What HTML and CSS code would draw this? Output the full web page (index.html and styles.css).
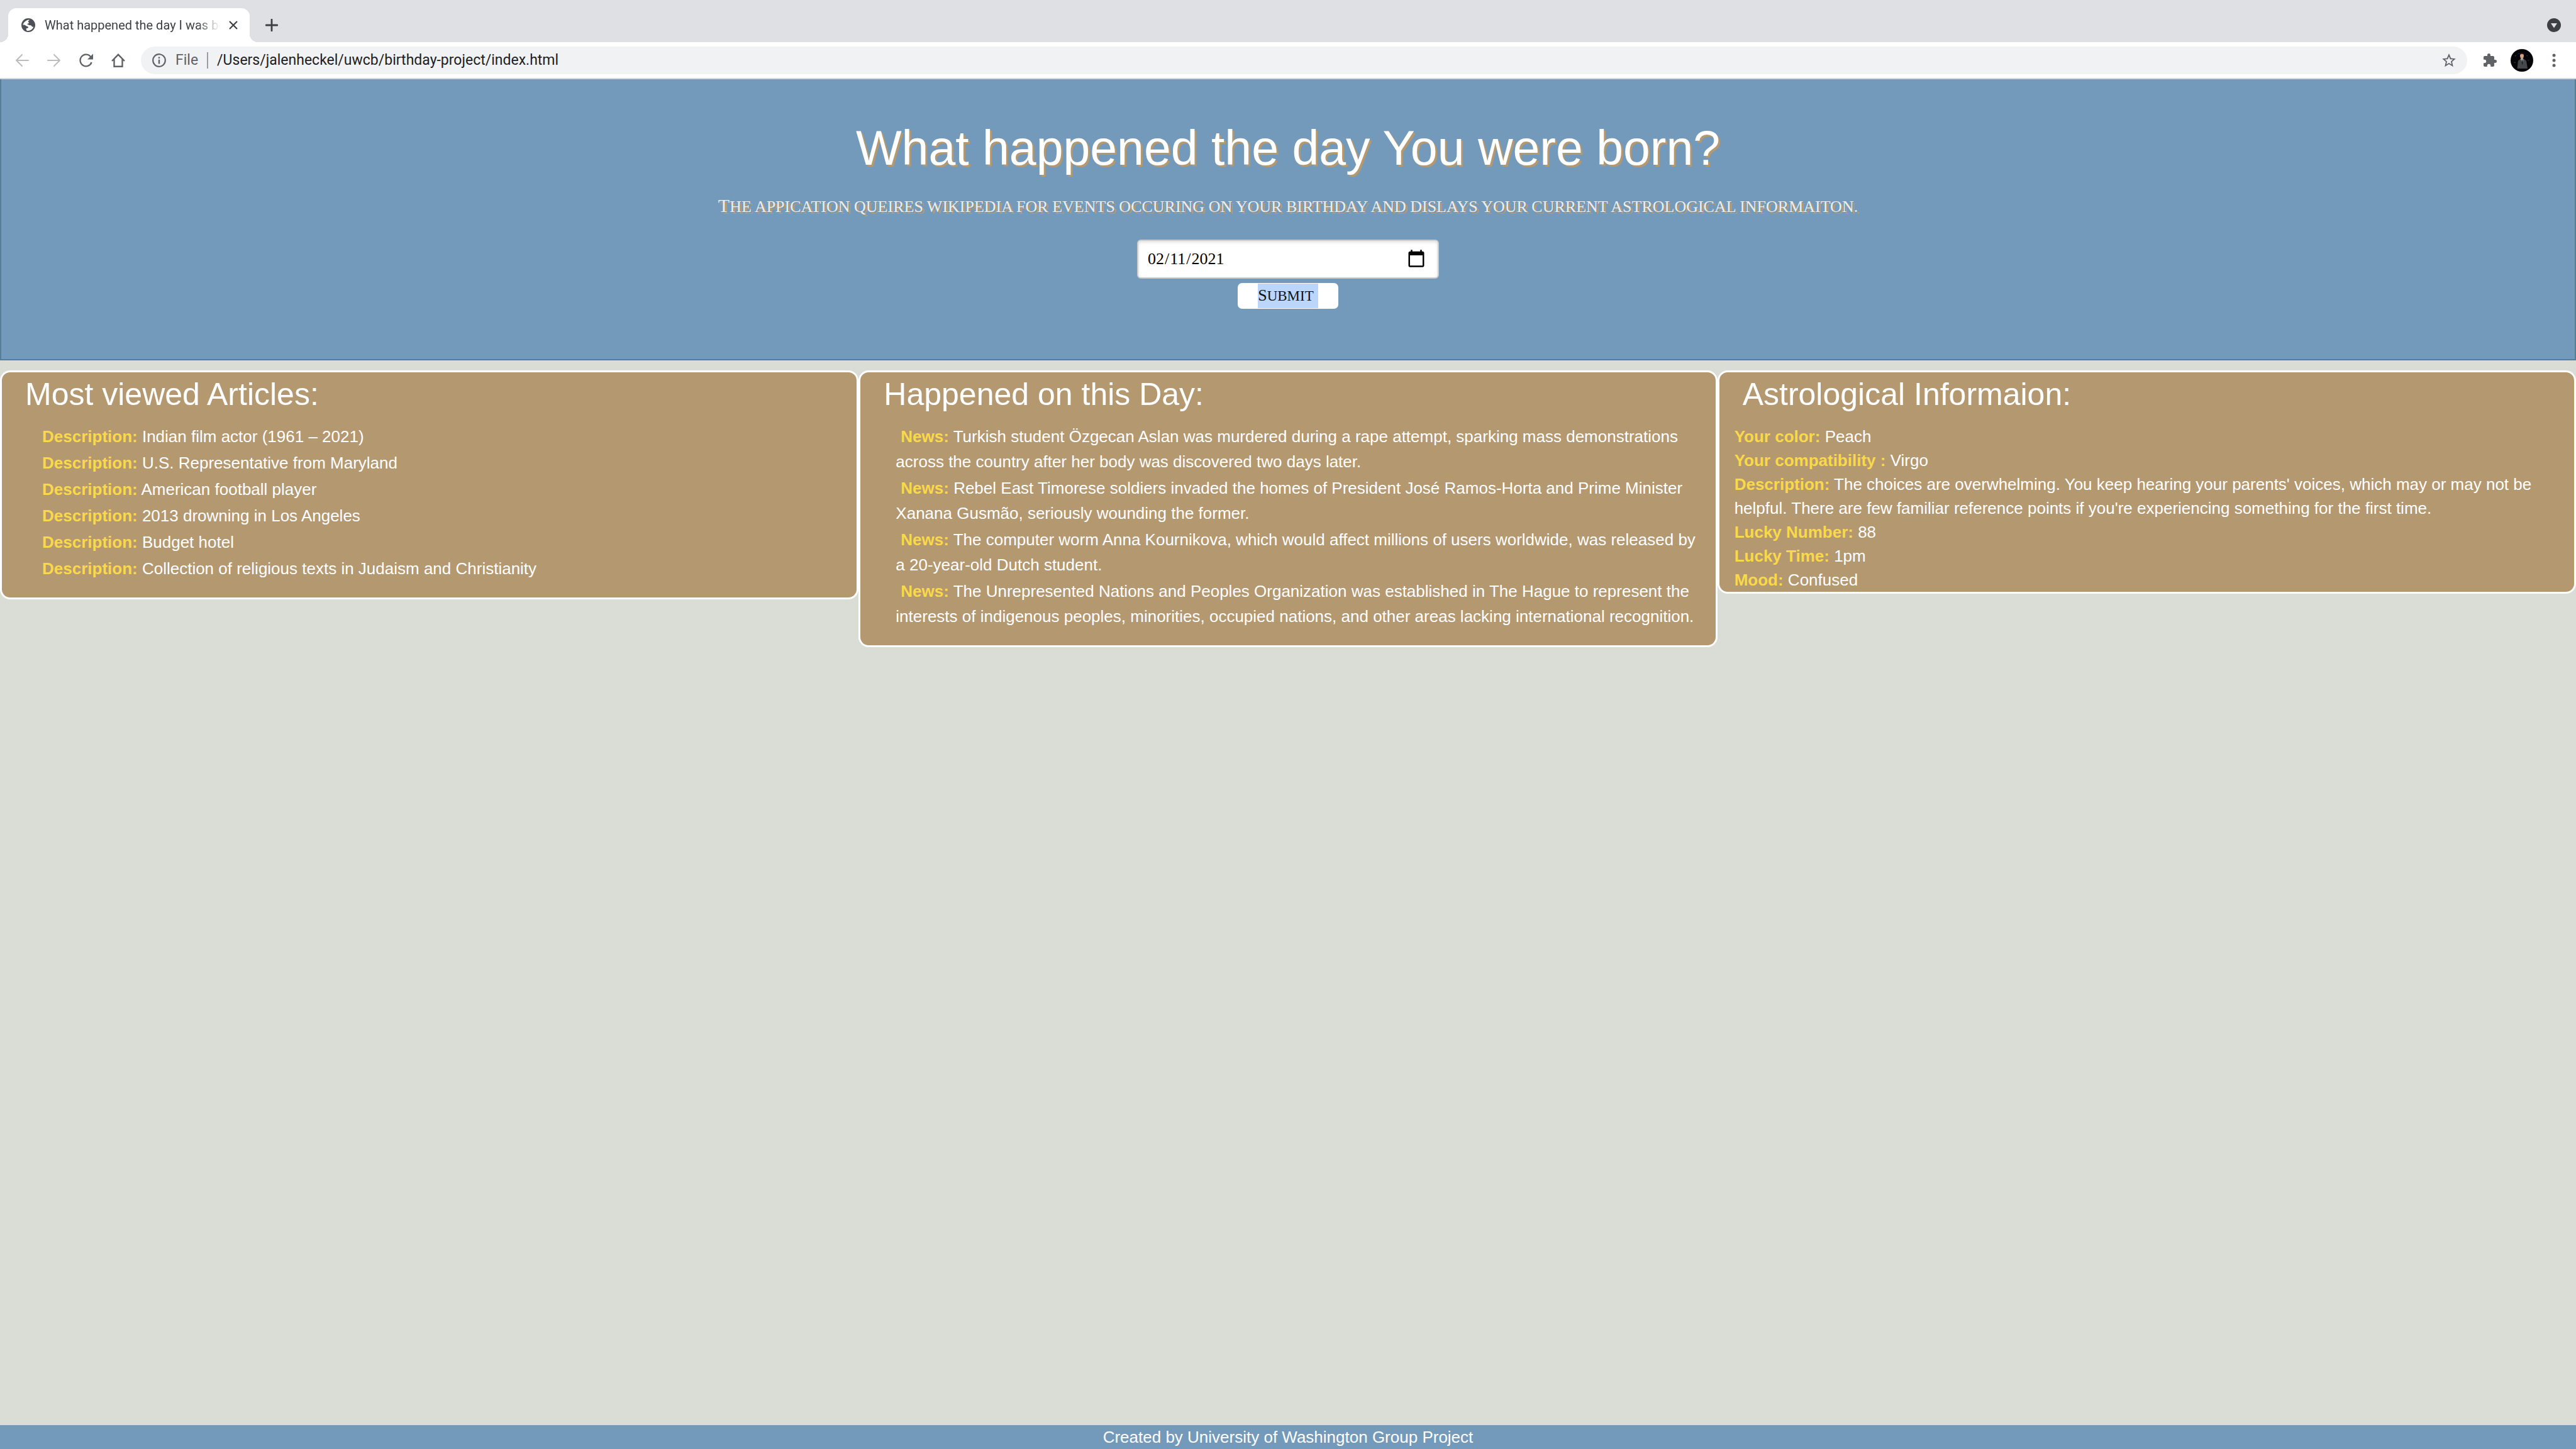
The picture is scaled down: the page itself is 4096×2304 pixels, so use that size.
FILE: index.html
```html
<!DOCTYPE html>
<html lang="en-US">
<head>
<meta charset="utf-8">
<title>What happened the day I was born?</title>
<link rel="stylesheet" href="styles.css">
</head>
<body>
<div class="browser">
  <div class="tabstrip">
    <div class="tab">
      <svg class="icon-22" viewBox="2 2 20 20" aria-hidden="true"><circle cx="12" cy="12" r="10" fill="#4d5156"/><path fill="#fff" d="M13.6 4.2c-.9-.1-4 .2-5.800 2.100C5.700 8.200 4.300 10 4.100 11.600c1.600-.3 3.200.2 4.400 1.200 1.200.9 3.300 1 3.500 2.100.1.900-.9 1.400-1.700 1.500-1 .1-1.500.6-1.300 1.600.1.700.4 1.400 1 1.900 3.500.9 8-1.300 9.600-5.400-1.100.2-2.300-.3-2.800-1.200-.4-.8-1.300-1.100-2.300-1-1.500.1-1.900-1-3.200-1.100-.9-.1-1-.9-.3-1.300.8-.4 2-.2 2-1.200 0-1.100-1.500-1-1.300-2.200.1-.9 1.500-.8 1.900-2.300z"/></svg>
      <span class="tab-title">What happened the day I was born?</span>
      <button class="icon-btn" aria-label="Close tab"><svg class="icon-14" viewBox="0 0 14 14"><path d="M1 1l12 12M13 1L1 13" stroke="#3c4043" stroke-width="2.200" fill="none"/></svg></button>
    </div>
    <button class="icon-btn new-tab" aria-label="New tab"><svg class="icon-20" viewBox="0 0 20 20"><path d="M10 1v18M1 10h18" stroke="#3c4043" stroke-width="2.800" stroke-linecap="round"/></svg></button>
    <button class="icon-btn tab-search" aria-label="Search tabs"><svg class="icon-22" viewBox="0 0 22 22"><circle cx="11" cy="11" r="11" fill="#3c4043"/><path d="M6 8h10l-5 7.500z" fill="#dfe0e4"/></svg></button>
  </div>
  <div class="toolbar">
    <button class="icon-btn tool" aria-label="Back"><svg class="icon-22" viewBox="0 0 22 22"><path d="M21 11H2.500M11 2l-9 9 9 9" stroke="#babcbe" stroke-width="2" fill="none" stroke-linecap="round"/></svg></button>
    <button class="icon-btn tool" aria-label="Forward"><svg class="icon-22" viewBox="0 0 22 22"><path d="M1 11h18.500M11 2l9 9-9 9" stroke="#babcbe" stroke-width="2" fill="none" stroke-linecap="round"/></svg></button>
    <button class="icon-btn tool" aria-label="Reload"><svg class="icon-22" viewBox="0 0 22 22"><path d="M19.600 14A9.300 9.300 0 1 1 17.500 4.500L20 7" stroke="#5f6368" stroke-width="2.300" fill="none"/><path d="M22 .500V9.500H13z" fill="#5f6368"/></svg></button>
    <button class="icon-btn tool" aria-label="Home"><svg class="icon-22" viewBox="0 0 22 22"><path d="M1 12L11 1.800 21 12M4.500 9v11.700h13V9" stroke="#5f6368" stroke-width="2.400" fill="none"/></svg></button>
    <div class="omnibox">
      <svg class="icon-22" viewBox="0 0 22 22" aria-hidden="true"><circle cx="11" cy="11" r="9.800" fill="none" stroke="#5f6368" stroke-width="2.200"/><path d="M11 9.800V16.500M11 5.500V8" stroke="#5f6368" stroke-width="2.400"/></svg>
      <label class="scheme" for="url">File</label>
      <input class="url" id="url" type="text" value="/Users/jalenheckel/uwcb/birthday-project/index.html">
      <button class="icon-btn" aria-label="Bookmark this page"><svg class="icon-24" viewBox="0 0 24 24"><path fill="#5f6368" d="M22.800 9.240l-7.560-.650L12 1 8.760 8.600 1.200 9.240l5.800 5.030L5.200 22.300 12 18.100l6.800 4.200-1.800-8.030zM12 15.900l-4.100 2.500 1.100-4.700-3.600-3.100 4.800-.4L12 5.800l1.800 4.400 4.800.4-3.600 3.100 1.100 4.700z"/></svg></button>
    </div>
    <button class="icon-btn tool" aria-label="Extensions"><svg class="icon-24" viewBox="0 0 24 24"><path fill="#5f6368" d="M20.500 11H19V7c0-1.100-.9-2-2-2h-4V3.500a2.500 2.500 0 0 0-5 0V5H4c-1.100 0-2 .9-2 2v3.800h1.500a2.700 2.700 0 0 1 0 5.400H2V20c0 1.100.9 2 2 2h3.800v-1.500a2.700 2.700 0 0 1 5.400 0V22H17c1.100 0 2-.9 2-2v-4h1.500a2.500 2.500 0 0 0 0-5z"/></svg></button>
    <button class="icon-btn tool" aria-label="Profile"><svg class="icon-36" viewBox="0 0 44 44"><circle cx="22" cy="22" r="22" fill="#050507"/><path d="M8 13h3M31 13h2M33 22h3M7 26h3M15 9h2" stroke="#26304f" stroke-width="1.500"/><path d="M13 38l1.500-15 5-4h6l5 4L33 38z" fill="#45484c"/><path d="M19.500 18.500h5L23 27z" fill="#f0eeee"/><path d="M21.500 20h1.500l.5 8-1.200 3z" fill="#111"/><ellipse cx="22" cy="13" rx="3.600" ry="5.200" fill="#d6a286"/><path d="M18 11c0-5 8-5 8 0-2-1.500-6-1.500-8 0z" fill="#2a1b16"/></svg></button>
    <button class="icon-btn tool" aria-label="Menu"><svg class="icon-22" viewBox="0 0 22 22"><g fill="#5f6368"><circle cx="11" cy="3" r="2.500"/><circle cx="11" cy="11" r="2.500"/><circle cx="11" cy="19" r="2.500"/></g></svg></button>
  </div>
</div>

<header class="hero">
  <h1>What happened the day You were born?</h1>
  <p class="lead">The appication queires wikipedia for events occuring on your birthday and dislays your current astrological informaiton.</p>
  <form class="birth-form">
    <input class="date" type="date" value="2021-02-11" aria-label="Birthday">
    <button class="submit" type="button"><span class="selected">Submit</span></button>
  </form>
</header>

<main class="columns">
  <section class="card">
    <h2>Most viewed Articles:</h2>
    <ul class="list">
      <li><b>Description:</b> Indian film actor (1961 – 2021)</li>
      <li><b>Description:</b> U.S. Representative from Maryland</li>
      <li><b>Description:</b> American football player</li>
      <li><b>Description:</b> 2013 drowning in Los Angeles</li>
      <li><b>Description:</b> Budget hotel</li>
      <li><b>Description:</b> Collection of religious texts in Judaism and Christianity</li>
    </ul>
  </section>
  <section class="card">
    <h2>Happened on this Day:</h2>
    <ul class="list">
      <li><b>News:</b> Turkish student Özgecan Aslan was murdered during a rape attempt, sparking mass demonstrations across the country after her body was discovered two days later.</li>
      <li><b>News:</b> Rebel East Timorese soldiers invaded the homes of President José Ramos-Horta and Prime Minister Xanana Gusmão, seriously wounding the former.</li>
      <li><b>News:</b> The computer worm Anna Kournikova, which would affect millions of users worldwide, was released by a 20-year-old Dutch student.</li>
      <li><b>News:</b> The Unrepresented Nations and Peoples Organization was established in The Hague to represent the interests of indigenous peoples, minorities, occupied nations, and other areas lacking international recognition.</li>
    </ul>
  </section>
  <section class="card">
    <h2>Astrological Informaion:</h2>
    <div class="facts">
      <p><b>Your color:</b> Peach</p>
      <p><b>Your compatibility :</b> Virgo</p>
      <p><b>Description:</b> The choices are overwhelming. You keep hearing your parents' voices, which may or may not be helpful. There are few familiar reference points if you're experiencing something for the first time.</p>
      <p><b>Lucky Number:</b> 88</p>
      <p><b>Lucky Time:</b> 1pm</p>
      <p><b>Mood:</b> Confused</p>
    </div>
  </section>
</main>

<footer class="footer">Created by University of Washington Group Project</footer>
</body>
</html>
```
FILE: styles.css
```css
* {
  box-sizing: border-box;
}

body {
  margin: 0;
  min-height: 100vh;
  display: flex;
  flex-direction: column;
  background: #daddd5;
  color: #fff;
  font-family: "Liberation Sans", Arial, sans-serif;
  font-size: 26px;
}

h1, h2, p, ul {
  margin: 0;
  padding: 0;
  font-weight: 400;
}

svg {
  display: block;
  flex: none;
}

.icon-14 { width: 14px; height: 14px; }
.icon-20 { width: 20px; height: 20px; }
.icon-22 { width: 22px; height: 22px; }
.icon-24 { width: 24px; height: 24px; }
.icon-36 { width: 36px; height: 36px; }

.icon-btn {
  display: flex;
  align-items: center;
  justify-content: center;
  padding: 0;
  border: 0;
  background: none;
}

/* Browser frame */
.browser {
  font-family: Roboto, sans-serif;
}

.tabstrip {
  display: flex;
  align-items: center;
  padding: 13px 24px 0 13px;
  background: #dfe0e4;
}

.tab {
  position: relative;
  display: flex;
  align-items: center;
  width: 384px;
  height: 54px;
  padding: 0 19px 0 21px;
  border-radius: 13px 13px 0 0;
  background: #fff;
}

.tab::before,
.tab::after {
  content: "";
  position: absolute;
  bottom: 0;
  width: 13px;
  height: 13px;
}

.tab::before {
  right: 100%;
  background: radial-gradient(circle at 0 0, transparent 13px, #fff 13px);
}

.tab::after {
  left: 100%;
  background: radial-gradient(circle at 100% 0, transparent 13px, #fff 13px);
}

.tab-title {
  flex: 1;
  margin: 0 14px 0 15px;
  overflow: hidden;
  white-space: nowrap;
  color: #3c4043;
  font-size: 20px;
  -webkit-mask-image: linear-gradient(to left, transparent, #000 36px);
  mask-image: linear-gradient(to left, transparent, #000 36px);
}

.new-tab {
  margin-left: 25px;
}

.tab-search {
  margin-left: auto;
}

.toolbar {
  display: flex;
  align-items: center;
  height: 59px;
  padding: 0 10px 0 9px;
  border-bottom: 2px solid #d5dade;
  background: #fff;
}

.tool {
  width: 51px;
  height: 44px;
}

.omnibox {
  flex: 1;
  display: flex;
  align-items: center;
  height: 44px;
  margin: 0 10px 0 11px;
  padding: 0 17px 0 18px;
  border-radius: 22px;
  background: #f1f2f4;
  font-size: 23px;
}

.scheme {
  margin: 0 14px 0 15px;
  color: #5f6368;
}

.url {
  flex: 1;
  height: 26px;
  padding: 0 0 0 14px;
  border: 0;
  border-left: 2px solid #9a9da1;
  background: none;
  color: #202124;
  font: inherit;
}

/* Page header */
.hero {
  padding: 63px 0 80px;
  border: 2px solid #567c96;
  border-top: 0;
  background: #739abb;
  text-align: center;
  text-shadow: 3px 3px 0 #b4986f;
}

.hero h1 {
  font-size: 77px;
  line-height: 92px;
}

.lead {
  margin: 28px 0 32px;
  color: #e8eef3;
  font-family: "Liberation Serif", "Times New Roman", serif;
  font-size: 26px;
  line-height: 40px;
  text-transform: uppercase;
}

.lead::first-letter {
  font-size: 30px;
  line-height: 1px;
}

.birth-form {
  display: flex;
  flex-direction: column;
  align-items: center;
  gap: 7px;
}

.date {
  width: 480px;
  height: 62px;
  padding: 0 18px 0 14px;
  border: 2px solid #ccc;
  border-radius: 6px;
  background: #fff;
  box-shadow: inset 0 2px 5px #ddd;
  color: #000;
  font-family: "Liberation Serif", "Times New Roman", serif;
  font-size: 26px;
}

.date::-webkit-calendar-picker-indicator {
  width: 32px;
  height: 32px;
  padding: 0;
}

.submit {
  width: 160px;
  height: 41px;
  padding: 1px 0;
  border: 0;
  border-radius: 7px;
  background: #fff;
  color: #111;
  font-family: "Liberation Serif", "Times New Roman", serif;
  font-size: 23px;
  line-height: 39px;
  text-transform: uppercase;
}

.selected {
  display: inline-block;
  padding-right: 7px;
  background: #bcd5fa;
  vertical-align: top;
}

.selected::first-letter {
  font-size: 26px;
  line-height: 1px;
}

/* Result columns */
.columns {
  display: grid;
  grid-template-columns: repeat(3, 1fr);
  align-items: start;
  margin-top: 16px;
}

.card {
  padding-top: 5px;
  border: 3px solid #fff;
  border-radius: 16px;
  background: #b4986f;
}

.card h2 {
  margin-bottom: 16px;
  padding: 0 37px;
  font-size: 50px;
  line-height: 61px;
}

.card b {
  color: #f9d84a;
}

.list {
  padding: 0 21px 24px 56px;
  list-style: none;
  line-height: 40px;
}

.list li {
  margin-bottom: 2px;
  text-indent: 8px;
}

.facts {
  padding: 1px 24px 0;
  line-height: 38px;
}

.footer {
  margin-top: auto;
  background: #739abb;
  line-height: 38px;
  text-align: center;
}
```
